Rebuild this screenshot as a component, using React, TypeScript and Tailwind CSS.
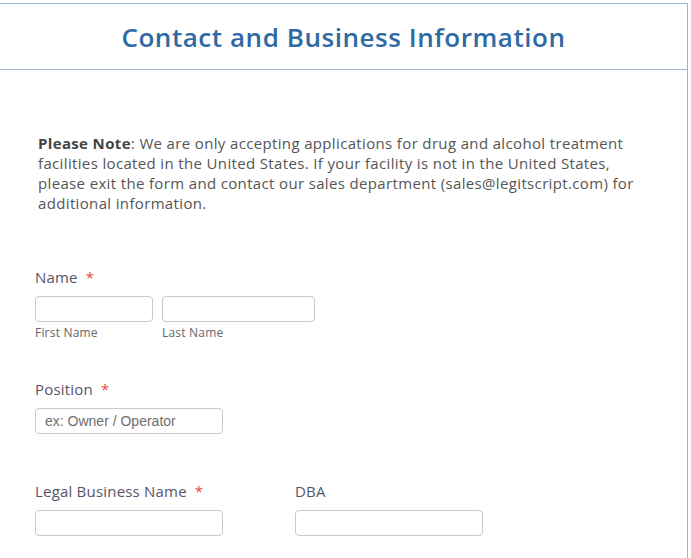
const font = { fontFamily: '"Open Sans", Lato, sans-serif' };

function Label({ text, required }: { text: string; required?: boolean }) {
  return (
    <div className="text-[15px] leading-5 text-[#57546a] h-5 tracking-[0.2px]">
      {text}
      {required && <span className="text-[#e8473e] ml-2">*</span>}
    </div>
  );
}

function Input({ w, placeholder }: { w: string; placeholder?: string }) {
  return (
    <input
      className={`${w} h-[26px] border border-[#c9c9c9] rounded-[4px] bg-white px-[9px] text-[14px] text-[#555] placeholder:text-[#6f6f6f] outline-none`}
      style={{ fontFamily: '"Liberation Sans", Arial, sans-serif' }}
      placeholder={placeholder}
    />
  );
}

export default function App() {
  return (
    <div className="w-[691px] h-[558px] bg-white overflow-hidden" style={font}>
      <div className="mt-[3px] w-[688px] border-t border-r border-[#9db4cc] h-[600px]">
        <div className="h-[66px] border-b border-[#9db4cc] flex items-center justify-center">
          <h1 className="text-[26px] font-semibold text-[#2f6aa3] tracking-[0.55px] mt-[2px]">
            Contact and Business Information
          </h1>
        </div>

        <p className="pl-[38px] pr-[20px] pt-[63px] text-[15px] leading-5 text-[#555] tracking-[0.35px]">
          <span className="font-bold text-[#444]">Please Note</span>: We are only accepting applications for drug and alcohol treatment
          <br />
          facilities located in the United States. If your facility is not in the United States,
          <br />
          please exit the form and contact our sales department (sales@legitscript.com) for
          <br />
          additional information.
        </p>

        <div className="pl-[35px] pt-[54px]">
          <Label text="Name" required />
          <div className="flex gap-[9px] mt-[9px]">
            <div className="flex flex-col">
              <Input w="w-[118px]" />
              <span className="mt-[3px] text-[12px] leading-4 text-[#666] tracking-[0.2px]">First Name</span>
            </div>
            <div className="flex flex-col">
              <Input w="w-[153px]" />
              <span className="mt-[3px] text-[12px] leading-4 text-[#666] tracking-[0.2px]">Last Name</span>
            </div>
          </div>

          <div className="mt-[38px]">
            <Label text="Position" required />
            <div className="mt-[9px]">
              <Input w="w-[188px]" placeholder="ex: Owner / Operator" />
            </div>
          </div>

          <div className="mt-[47px] flex gap-[72px]">
            <div className="flex flex-col gap-[9px]">
              <Label text="Legal Business Name" required />
              <Input w="w-[188px]" />
            </div>
            <div className="flex flex-col gap-[9px]">
              <Label text="DBA" />
              <Input w="w-[188px]" />
            </div>
          </div>
        </div>
      </div>
    </div>
  );
}
